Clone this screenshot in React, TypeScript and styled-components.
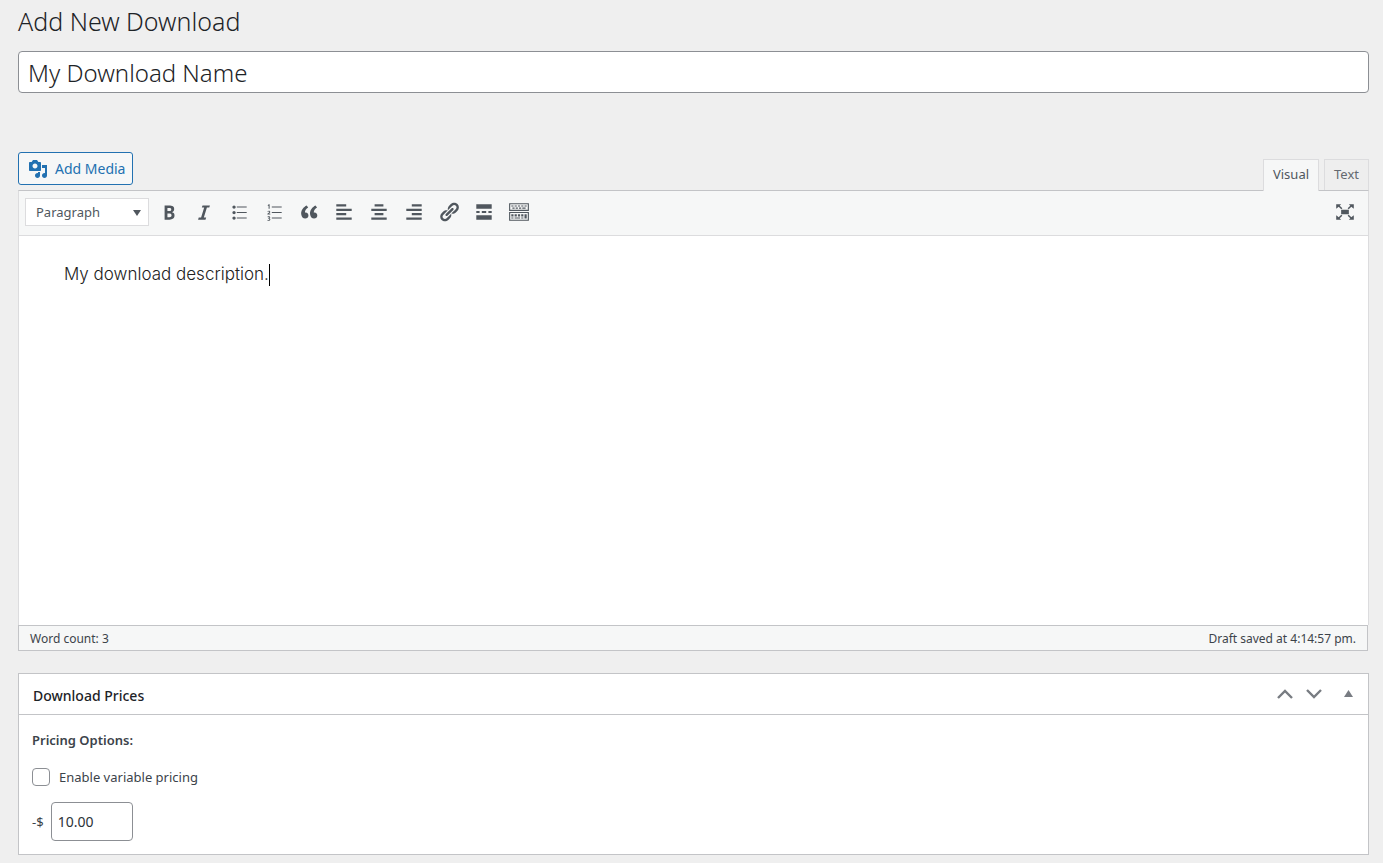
import React, { useState } from "react";
import styled, { createGlobalStyle } from "styled-components";

const line = "#c3c4c7";
const softLine = "#dcdcde";
const panel = "#f6f7f7";
const blue = "#2271b1";
const slate = "#50575e";

const GlobalStyle = createGlobalStyle`
  *, *::before, *::after { box-sizing: border-box; }
  body {
    margin: 0;
    background: #efefef;
    color: #3c434a;
    font-family: "Noto Sans", "Open Sans", sans-serif;
    font-size: 13px;
    line-height: 20px;
  }
  button, input, select { font: inherit; color: inherit; }
`;

const Page = styled.main`
  padding: 3px 14px 8px 18px;
`;

const PageTitle = styled.h1`
  margin: 0 0 12px;
  font-size: 25px;
  line-height: 36px;
  font-weight: 300;
  color: #1d2327;
`;

const TitleInput = styled.input`
  display: block;
  width: 100%;
  height: 42px;
  padding: 0 9px;
  border: 1px solid #8c8f94;
  border-radius: 4px;
  background: #fff;
  font-size: 24px;
  font-weight: 300;
  color: #1d2327;
`;

const EditorTools = styled.div`
  display: flex;
  justify-content: space-between;
  align-items: flex-start;
  height: 38px;
  margin-top: 59px;
`;

const MediaButton = styled.button`
  display: flex;
  align-items: center;
  gap: 7px;
  height: 33px;
  padding: 0 7px 0 9px;
  border: 1px solid ${blue};
  border-radius: 3px;
  background: ${panel};
  color: ${blue};
  font-size: 14px;
`;

const Tabs = styled.div`
  display: flex;
  gap: 5px;
  padding-top: 7px;
`;

const Tab = styled.button<{ $active?: boolean }>`
  position: relative;
  height: ${(p) => (p.$active ? 32 : 31)}px;
  padding: 0 9px ${(p) => (p.$active ? 3 : 2)}px;
  border: 1px solid ${softLine};
  border-bottom: 0;
  background: ${(p) => (p.$active ? panel : "#eeeeee")};
  color: ${(p) => (p.$active ? slate : "#646970")};
  z-index: 1;
`;

const Editor = styled.section`
  border: 1px solid ${softLine};
  border-top-color: ${line};
  border-bottom: 0;
  background: #fff;
`;

const Toolbar = styled.div`
  display: flex;
  align-items: center;
  height: 45px;
  padding: 0 6px 2px;
  border-bottom: 1px solid ${softLine};
  background: ${panel};
  color: ${slate};
`;

const FormatBox = styled.div`
  position: relative;
  display: flex;
  margin-right: 2px;
  svg {
    position: absolute;
    right: 8px;
    top: 12px;
    pointer-events: none;
  }
`;

const FormatSelect = styled.select`
  appearance: none;
  width: 124px;
  height: 28px;
  padding: 0 10px;
  border: 1px solid ${softLine};
  border-radius: 0;
  background: #fff;
`;

const ToolButton = styled.button<{ $end?: boolean }>`
  display: grid;
  place-items: center;
  width: 35px;
  height: 32px;
  padding: 0;
  margin-left: ${(p) => (p.$end ? "auto" : "0")};
  border: 0;
  background: none;
`;

const Content = styled.div`
  height: 389px;
  padding: 24px 45px;
  font-family: Inter, "Open Sans", sans-serif;
  font-size: 17px;
  line-height: 28px;
  font-weight: 300;
  color: #222;
  outline: none;
`;

const Caret = styled.span`
  display: inline-block;
  width: 1px;
  height: 22px;
  vertical-align: middle;
  background: #000;
`;

const StatusBar = styled.div`
  display: flex;
  justify-content: space-between;
  align-items: center;
  height: 26px;
  margin-right: 1px;
  padding: 2px 11px 0;
  border: 1px solid ${line};
  background: ${panel};
  font-size: 12px;
`;

const PostBox = styled.section`
  margin-top: 22px;
  border: 1px solid ${line};
  background: #fff;
`;

const PostBoxHeader = styled.header`
  display: flex;
  justify-content: space-between;
  align-items: center;
  height: 41px;
  padding: 3px 8px 0 14px;
  border-bottom: 1px solid ${line};
`;

const BoxTitle = styled.h2`
  margin: 0;
  font-size: 14px;
  font-weight: 500;
  color: #1d2327;
`;

const Handles = styled.div`
  display: flex;
  gap: 5px;
  button:last-child { margin-left: 5px; }
`;

const HandleButton = styled.button`
  display: grid;
  place-items: center;
  width: 24px;
  height: 24px;
  padding: 0 0 4px;
  border: 0;
  background: none;
  color: #787c82;
`;

const PostBoxBody = styled.div`
  display: flex;
  flex-direction: column;
  align-items: flex-start;
  padding: 15px 13px 13px;
`;

const Label = styled.strong`
  font-weight: 600;
`;

const CheckRow = styled.label`
  display: flex;
  align-items: center;
  gap: 9px;
  margin: 17px 0 15px;
`;

const CheckBox = styled.input`
  appearance: none;
  width: 18px;
  height: 18px;
  margin: 0;
  border: 1px solid #8c8f94;
  border-radius: 4px;
  background: #fff;
  &:checked { background: ${blue}; }
`;

const PriceRow = styled.label`
  display: flex;
  align-items: center;
  gap: 7px;
`;

const PriceInput = styled.input`
  width: 82px;
  height: 39px;
  padding: 0 6px;
  border: 1px solid #8c8f94;
  border-radius: 4px;
  font-size: 14px;
  color: #2c3338;
`;

const Icon = ({ d, size = 22 }: { d: string; size?: number }) => (
  <svg width={size} height={size} viewBox="0 0 20 20" fill="currentColor" fillRule="evenodd" aria-hidden="true">
    <path d={d} />
  </svg>
);

const mediaPath =
  "M13 11V4c0-.55-.45-1-1-1h-1.67L9 1H5L3.67 3H2c-.55 0-1 .45-1 1v7c0 .55.45 1 1 1h10c.55 0 1-.45 1-1zM7 4.5c1.38 0 2.5 1.12 2.5 2.5S8.38 9.5 7 9.5 4.5 8.38 4.5 7 5.62 4.5 7 4.5zM14 6h5v10.5c0 1.38-1.12 2.5-2.5 2.5S14 17.88 14 16.5s1.12-2.5 2.5-2.5c.17 0 .34.02.5.05V9h-3V6zm-4 8.05V13h2v3.5c0 1.38-1.12 2.5-2.5 2.5S7 17.88 7 16.5 8.12 14 9.5 14c.17 0 .34.02.5.05z";

const tools: { name: string; d: string }[] = [
  {
    name: "Bold",
    d: "M6 4v13h4.54c1.37 0 2.46-.33 3.26-1 .8-.66 1.2-1.58 1.2-2.77 0-.84-.17-1.51-.51-2.01s-.9-.85-1.67-1.03v-.09c.57-.1 1.02-.4 1.36-.9s.51-1.13.51-1.91c0-1.14-.39-1.98-1.17-2.5C12.75 4.26 11.5 4 9.78 4H6zm2.57 5.15V6.26h1.36c.73 0 1.27.11 1.61.32.34.22.51.58.51 1.07 0 .54-.16.92-.47 1.15s-.82.35-1.51.35h-1.5zm0 2.19h1.6c1.44 0 2.16.53 2.16 1.61 0 .6-.17 1.05-.51 1.34s-.86.43-1.57.43H8.57v-3.38z",
  },
  { name: "Italic", d: "M14.78 6h-2.13l-2.8 9h2.12l-.62 2H4.6l.62-2h2.14l2.8-9H8.03l.62-2h6.75z" },
  {
    name: "Bulleted list",
    d: "M5.5 7C4.67 7 4 6.33 4 5.5 4 4.68 4.67 4 5.5 4 6.32 4 7 4.68 7 5.5 7 6.33 6.32 7 5.5 7zM8 5h9v1H8V5zm-2.5 7c-.83 0-1.5-.67-1.5-1.5C4 9.68 4.67 9 5.5 9c.82 0 1.5.68 1.5 1.5 0 .83-.68 1.5-1.5 1.5zM8 10h9v1H8v-1zm-2.5 7c-.83 0-1.5-.67-1.5-1.5 0-.82.67-1.5 1.5-1.5.82 0 1.5.68 1.5 1.5 0 .83-.68 1.5-1.5 1.5zM8 15h9v1H8v-1z",
  },
  {
    name: "Numbered list",
    d: "M4.2 3.9L5.3 3H6v4H5.1V4.1l-.5.4zM8 5h9v1H8zM4 9.3C4.9 8.4 6.6 8.7 6.6 9.9c0 .7-.6 1.1-1.2 1.7h1.3v.7H4v-.6c.9-.9 1.7-1.3 1.7-1.8 0-.5-.7-.5-1.2 0zM8 10h9v1H8zM4.1 14.2c.9-.5 2.5-.3 2.5.8 0 .4-.3.7-.7.9.5.1.8.4.8.9 0 1.2-1.7 1.4-2.7.9v-.7c.6.3 1.8.4 1.8-.3 0-.5-.5-.5-1.1-.5v-.6c.6 0 1.1 0 1.1-.5s-.8-.5-1.3-.2zM8 15h9v1H8z",
  },
  {
    name: "Blockquote",
    d: "M9.49 13.22c0-.74-.2-1.38-.61-1.9-.62-.78-1.83-.88-2.53-.72-.29-1.65 1.11-3.75 2.92-4.65L7.88 4c-2.73 1.3-5.42 4.28-4.96 8.05C3.21 14.43 4.59 16 6.54 16c.85 0 1.56-.25 2.12-.75s.83-1.18.83-2.03zm8.05 0c0-.74-.2-1.38-.61-1.9-.63-.78-1.83-.88-2.53-.72-.29-1.65 1.11-3.75 2.92-4.65L15.93 4c-2.73 1.3-5.41 4.28-4.95 8.05.29 2.38 1.66 3.95 3.61 3.95.85 0 1.56-.25 2.12-.75s.83-1.18.83-2.03z",
  },
  { name: "Align left", d: "M12 5V3H3v2h9zm5 4V7H3v2h14zm-5 4v-2H3v2h9zm5 4v-2H3v2h14z" },
  { name: "Align center", d: "M14 5V3H6v2h8zm3 4V7H3v2h14zm-3 4v-2H6v2h8zm3 4v-2H3v2h14z" },
  { name: "Align right", d: "M17 5V3H8v2h9zm0 4V7H3v2h14zm0 4v-2H8v2h9zm0 4v-2H3v2h14z" },
  {
    name: "Insert link",
    d: "M17.74 2.76c1.68 1.69 1.68 4.41 0 6.1l-1.53 1.52c-1.12 1.12-2.7 1.47-4.14 1.09l2.62-2.61.76-.77.76-.76c.84-.84.84-2.2 0-3.04-.84-.85-2.2-.85-3.04 0l-.77.76-3.38 3.38c-.37-1.44-.02-3.02 1.1-4.14l1.52-1.53c1.69-1.68 4.42-1.68 6.1 0zM8.59 13.43l5.34-5.34c.42-.42.42-1.1 0-1.52-.44-.43-1.13-.39-1.53 0l-5.33 5.34c-.42.42-.42 1.1 0 1.52.44.43 1.13.39 1.52 0zm-.76 2.29l4.14-4.15c.38 1.44.03 3.02-1.09 4.14l-1.52 1.53c-1.69 1.68-4.41 1.68-6.1 0-1.68-1.68-1.68-4.42 0-6.1l1.53-1.52c1.12-1.12 2.7-1.47 4.14-1.1l-4.14 4.15c-.85.84-.85 2.2 0 3.05.84.84 2.2.84 3.04 0z",
  },
  { name: "Insert Read More tag", d: "M17 7V3H3v4h14zM6 11V9H3v2h3zm6 0V9H8v2h4zm5 0V9h-3v2h3zm0 6v-4H3v4h14z" },
  {
    name: "Toolbar Toggle",
    d: "M1 2h18v7H1zM2 3v5h16V3zM3 4h2v1H3zM6 4h2v1H6zM9 4h2v1H9zM12 4h2v1h-2zM15 4h2v1h-2zM4 6h2v1H4zM7 6h2v1H7zM10 6h2v1h-2zM13 6h3v1h-3zM1 10h18v8H1zM2 11v6h16v-6zM3 12h2v2H3zM6 12h2v2H6zM9 12h2v2H9zM12 12h2v2h-2zM15 12h2v4h-2zM3 15h2v1H3zM6 15h5v1H6zM12 15h2v1h-2z",
  },
];

const fullscreenPath =
  "M6.5 8h7v4h-7zM2 3h4.5L5.2 4.3 7.6 6.6 6.6 7.6 4.3 5.2 2 7zM18 3v4l-2.3-1.8-2.3 2.4-1-1 2.4-2.3L13.5 3zM2 17v-4l2.3 1.8 2.3-2.4 1 1-2.4 2.3L6.5 17zM18 17h-4.5l1.3-1.3-2.4-2.3 1-1 2.3 2.4L18 13z";

export default function App() {
  const [name, setName] = useState("My Download Name");
  const [variable, setVariable] = useState(false);
  const [price, setPrice] = useState("10.00");

  return (
    <>
      <GlobalStyle />
      <Page>
        <PageTitle>Add New Download</PageTitle>
        <TitleInput aria-label="Download name" value={name} onChange={(e) => setName(e.target.value)} />

        <EditorTools>
          <MediaButton type="button">
            <Icon d={mediaPath} size={20} />
            Add Media
          </MediaButton>
          <Tabs>
            <Tab type="button" $active>Visual</Tab>
            <Tab type="button">Text</Tab>
          </Tabs>
        </EditorTools>

        <Editor>
          <Toolbar>
            <FormatBox>
              <FormatSelect aria-label="Format" defaultValue="Paragraph">
                <option>Paragraph</option>
              </FormatSelect>
              <svg width="8" height="6" viewBox="0 0 8 6" fill="currentColor" aria-hidden="true">
                <path d="M0 0h8L4 6z" />
              </svg>
            </FormatBox>
            {tools.map((t) => (
              <ToolButton key={t.name} type="button" aria-label={t.name}>
                <Icon d={t.d} />
              </ToolButton>
            ))}
            <ToolButton type="button" aria-label="Distraction-free writing mode" $end>
              <Icon d={fullscreenPath} />
            </ToolButton>
          </Toolbar>
          <Content role="textbox" aria-multiline="true" aria-label="Description" contentEditable suppressContentEditableWarning>
            My download description.<Caret />
          </Content>
        </Editor>
        <StatusBar>
          <span>Word count: 3</span>
          <span>Draft saved at 4:14:57 pm.</span>
        </StatusBar>

        <PostBox>
          <PostBoxHeader>
            <BoxTitle>Download Prices</BoxTitle>
            <Handles>
              <HandleButton type="button" aria-label="Move up">
                <svg width="16" height="10" viewBox="0 0 16 10" fill="none" stroke="currentColor" strokeWidth="2.4">
                  <path d="M1 9l7-7 7 7" />
                </svg>
              </HandleButton>
              <HandleButton type="button" aria-label="Move down">
                <svg width="16" height="10" viewBox="0 0 16 10" fill="none" stroke="currentColor" strokeWidth="2.4">
                  <path d="M1 1l7 7 7-7" />
                </svg>
              </HandleButton>
              <HandleButton type="button" aria-label="Toggle panel">
                <svg width="9" height="7" viewBox="0 0 9 7" fill="currentColor">
                  <path d="M0 7h9L4.5 0z" />
                </svg>
              </HandleButton>
            </Handles>
          </PostBoxHeader>
          <PostBoxBody>
            <Label>Pricing Options:</Label>
            <CheckRow>
              <CheckBox type="checkbox" checked={variable} onChange={(e) => setVariable(e.target.checked)} />
              Enable variable pricing
            </CheckRow>
            <PriceRow>
              -$
              <PriceInput value={price} onChange={(e) => setPrice(e.target.value)} />
            </PriceRow>
          </PostBoxBody>
        </PostBox>
      </Page>
    </>
  );
}
